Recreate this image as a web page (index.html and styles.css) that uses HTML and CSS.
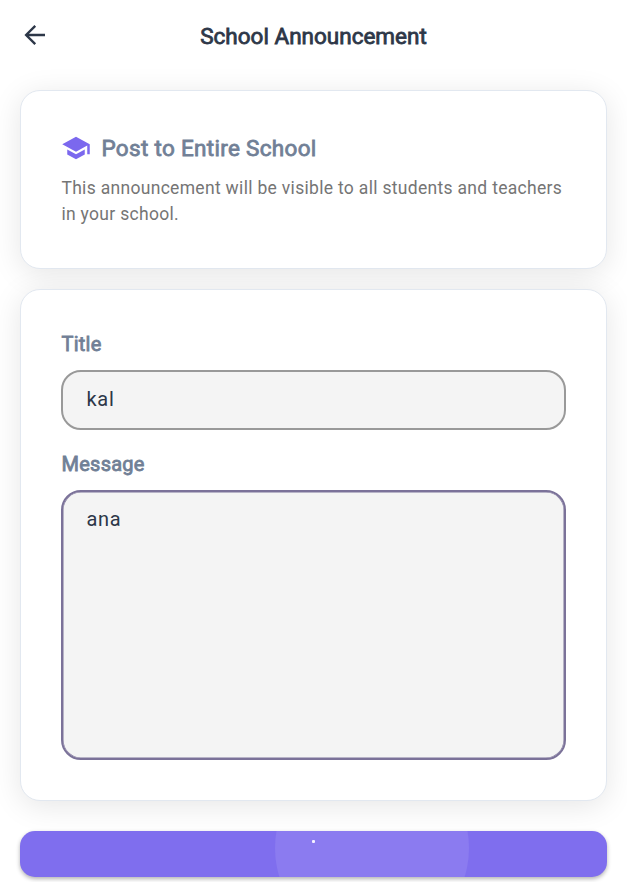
FILE: index.html
```html
<!DOCTYPE html>
<html lang="en">
<head>
<meta charset="utf-8">
<title>School Announcement</title>
<link rel="stylesheet" href="styles.css">
</head>
<body>
<header class="appbar">
  <svg class="back" viewBox="0 0 24 24" aria-label="Back"><path d="M20 12H5M12.2 4.7 4.9 12l7.3 7.3"/></svg>
  <h1>School Announcement</h1>
</header>
<main>
  <section class="card intro">
    <div class="heading">
      <svg class="school" viewBox="0 0 24 24"><path d="M5 13.18v4L12 21l7-3.82v-4L12 17l-7-3.82zM12 3 1 9l11 6 9-4.91V17h2V9L12 3z"/></svg>
      <h2>Post to Entire School</h2>
    </div>
    <p>This announcement will be visible to all students and teachers<br>in your school.</p>
  </section>
  <form class="card form">
    <label for="title">Title</label>
    <div class="field" id="title">kal</div>
    <label for="message">Message</label>
    <div class="field message" id="message">ana</div>
  </form>
  <div class="button"><span class="ripple"></span><span class="spinner"></span></div>
</main>
</body>
</html>
```
FILE: styles.css
```css
* { box-sizing: border-box; }
body {
  margin: 0;
  height: 882px;
  overflow: hidden;
  background: #fff;
  color: #2d3748;
  font-family: Roboto, sans-serif;
}
.appbar {
  height: 70px;
  display: grid;
  grid-template-columns: 70px 1fr 70px;
  align-items: center;
}
.back {
  width: 30px;
  height: 30px;
  margin-left: 20px;
  fill: none;
  stroke: #2d3748;
  stroke-width: 1.9;
}
h1, h2, label { font-weight: 400; -webkit-text-stroke: 0.8px currentColor; }
h1 {
  margin: 1px 0 0;
  text-align: center;
  font-size: 22.5px;
  line-height: 28px;
}
main { padding: 20px 20px 0; }
.card {
  border: 1.25px solid #e2e8f0;
  border-radius: 20px;
  background: #fff;
  box-shadow: 0 5px 30px rgba(0, 0, 0, 0.1);
  padding: 40px;
}
.intro {
  position: relative;
  height: 179px;
  margin-bottom: 20px;
}
.form { position: relative; }
.heading { display: flex; align-items: center; gap: 10.5px; height: 33px; }
.school { width: 30px; height: 30px; fill: #7b68ee; }
h2 {
  margin: 0;
  color: #718096;
  font-size: 22.5px;
  line-height: 28px;
  letter-spacing: 0.31px;
}
p {
  margin: 11px 0 0 0.4px;
  color: #757575;
  font-size: 17.5px;
  line-height: 26px;
  letter-spacing: 0.31px;
  white-space: nowrap;
}
.form { height: 512px; }
label {
  display: block;
  height: 40px;
  padding: 1px 0 0 0.5px;
  color: #718096;
  font-size: 20px;
  line-height: 26px;
  letter-spacing: 0.25px;
}
.field {
  height: 60px;
  border: 2px solid #999;
  border-radius: 20px;
  background: #f4f4f4;
  padding: 12px 23.5px;
  margin-bottom: 20px;
  font-size: 20px;
  line-height: 30px;
  letter-spacing: 0.7px;
}
.message {
  height: 270px;
  border-color: #7b7299;
  box-shadow: inset 0 0 0 0.5px #7b7299;
  margin-bottom: 0;
}
.button {
  position: relative;
  overflow: hidden;
  height: 46px;
  margin-top: 30px;
  border-radius: 15px;
  background: #7f6eee;
  box-shadow: 0 2px 4px rgba(0, 0, 0, 0.3);
}
.ripple {
  position: absolute;
  left: 254.5px;
  top: -80px;
  width: 194px;
  height: 194px;
  border-radius: 50%;
  background: #8b7bf0;
}
.spinner {
  position: absolute;
  left: 292px;
  top: 9px;
  width: 3px;
  height: 3px;
  border-radius: 1px;
  background: #f4f1ff;
}
```
